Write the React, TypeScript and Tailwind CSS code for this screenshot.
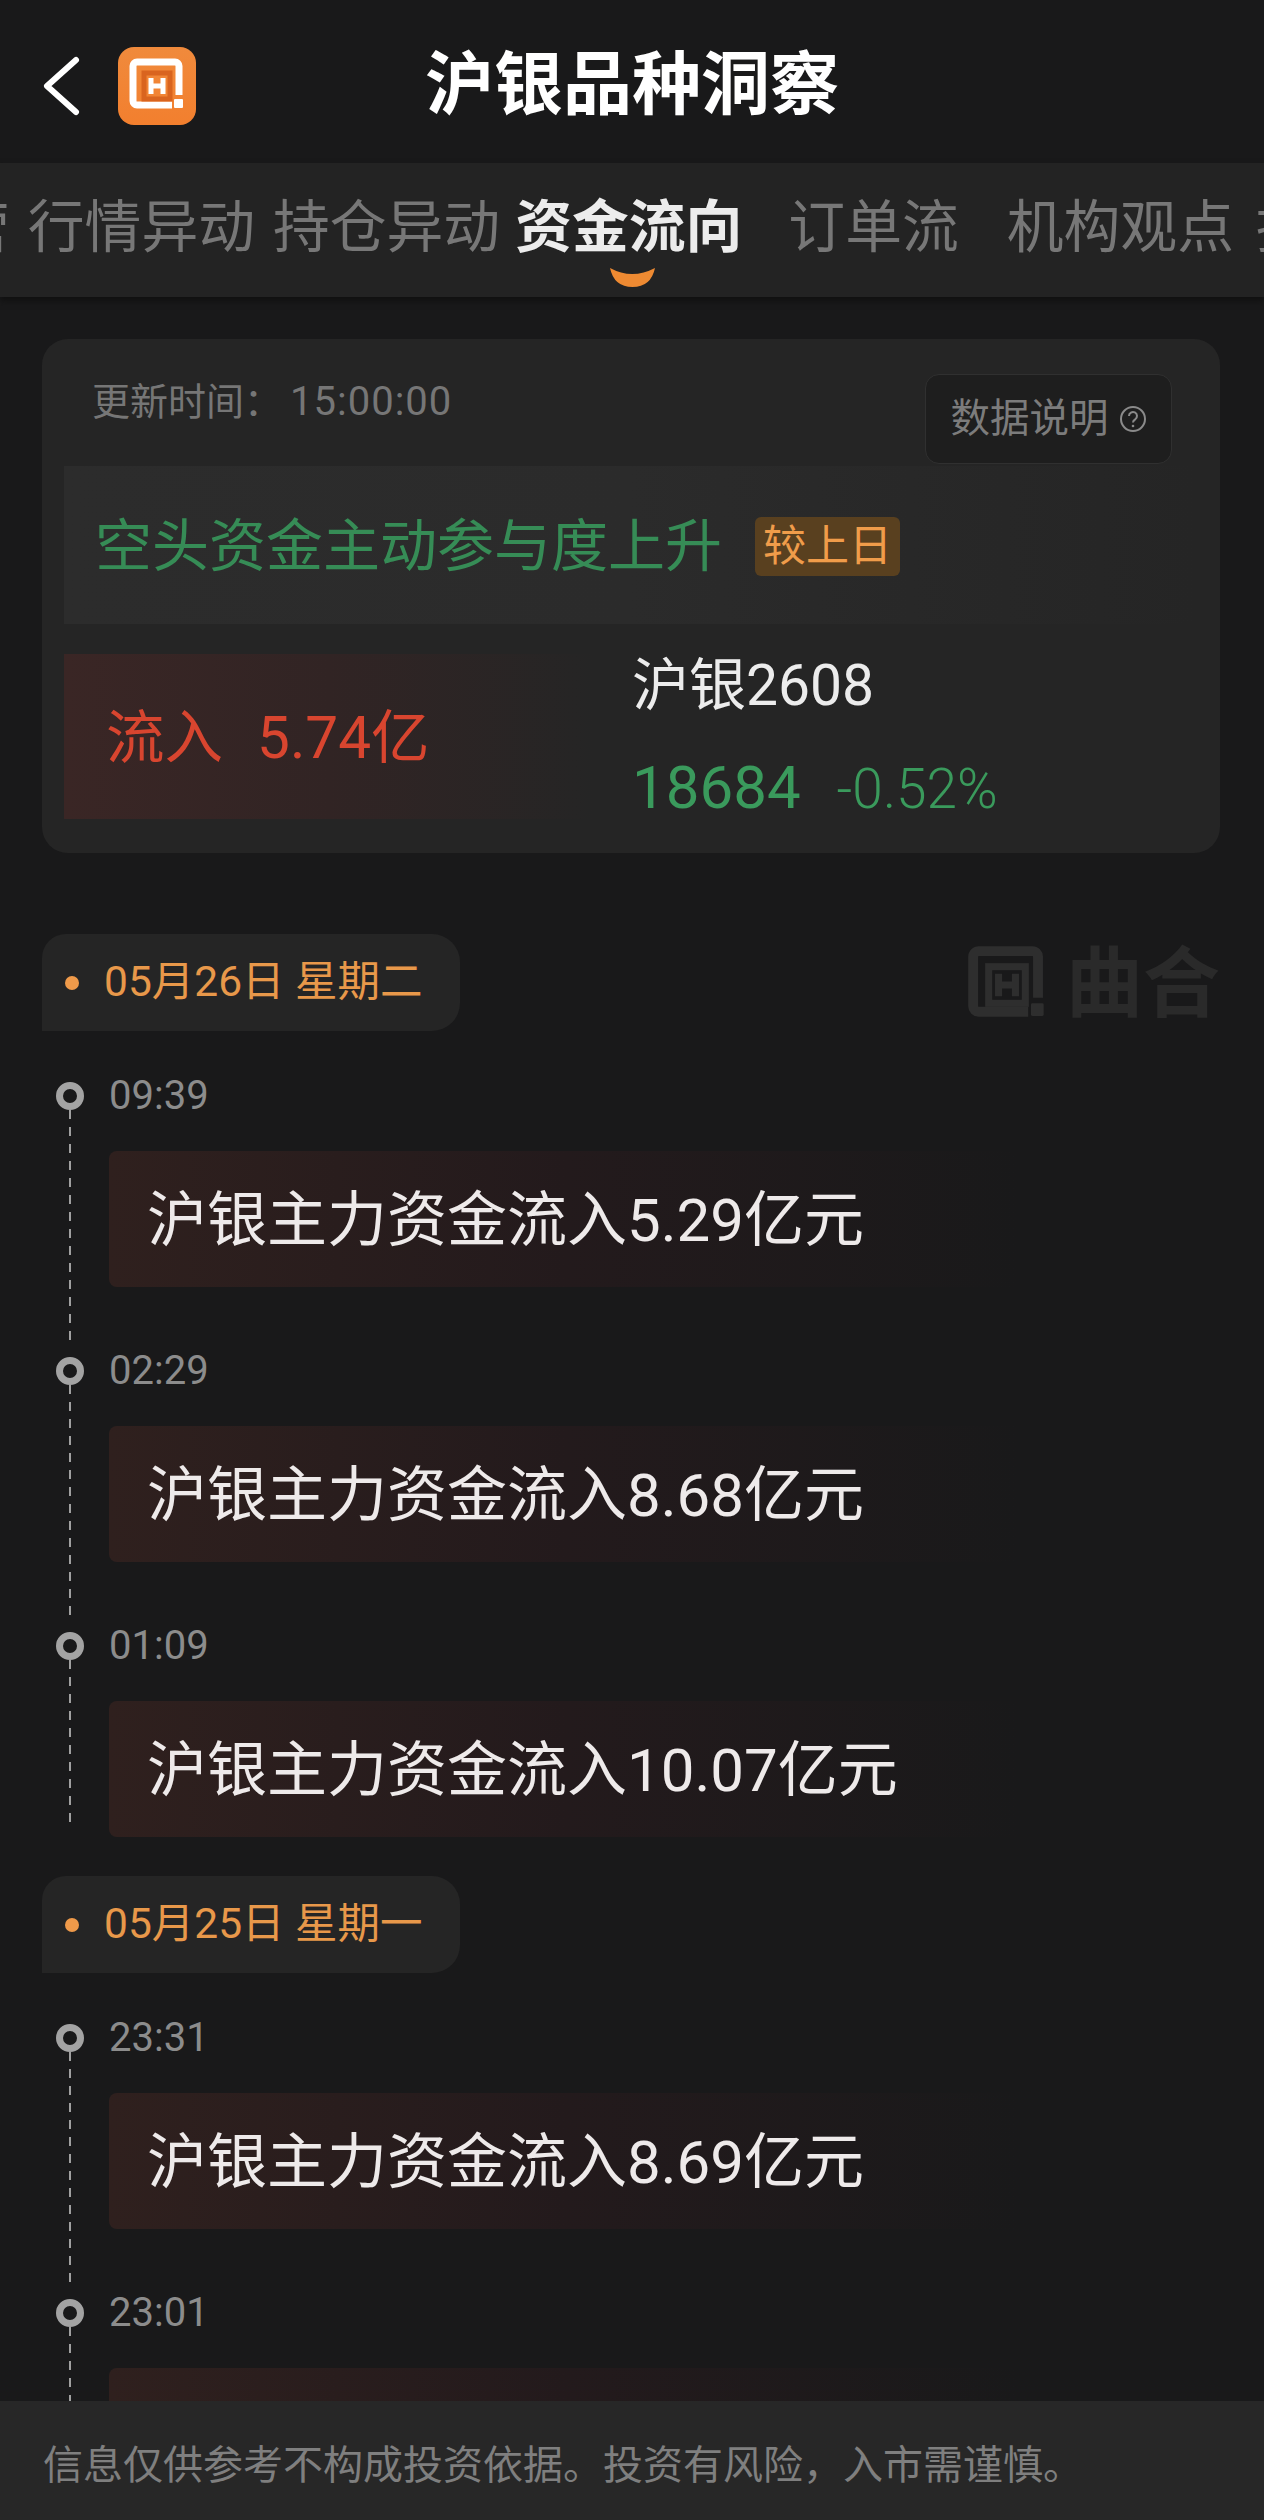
import React from 'react';

const tabs = [
  { label: '营', cls: 'ml-[-47px]' },
  { label: '行情异动', cls: 'ml-[18px]' },
  { label: '持仓异动', cls: 'ml-[18px]' },
  { label: '资金流向', cls: 'ml-[15px]', active: true },
  { label: '订单流', cls: 'ml-[46px]' },
  { label: '机构观点', cls: 'ml-[48px]' },
  { label: '持', cls: 'ml-[22px]' },
];

interface FlowItem {
  time: string;
  text: string;
  last?: boolean;
}

const day1: FlowItem[] = [
  { time: '09:39', text: '沪银主力资金流入5.29亿元' },
  { time: '02:29', text: '沪银主力资金流入8.68亿元' },
  { time: '01:09', text: '沪银主力资金流入10.07亿元', last: true },
];

const day2: FlowItem[] = [
  { time: '23:31', text: '沪银主力资金流入8.69亿元' },
  { time: '23:01', text: '沪银主力资金流入7.52亿元' },
];

function LogoMark({ className = '', stroke = '#fff', inner = '#d9641f' }: { className?: string; stroke?: string; inner?: string }) {
  return (
    <svg viewBox="0 0 78 78" className={className} fill="none">
      <path d="M54 58H19a4 4 0 0 1-4-4V19a4 4 0 0 1 4-4h38a4 4 0 0 1 4 4v29" stroke={stroke} strokeWidth="7" />
      <rect x="26" y="26" width="26" height="26" stroke={inner} strokeWidth="5" />
      <path d="M33 31v16M45 31v16M33 39h12" stroke={stroke} strokeWidth="5" />
      <rect x="56" y="52" width="9" height="9" rx="1" fill={stroke} />
    </svg>
  );
}

function DateChip({ label }: { label: string }) {
  return (
    <div className="h-[97px] w-[418px] rounded-tl-[24px] rounded-r-[28px] bg-[#252525] flex items-center">
      <span className="ml-[23px] w-[14px] h-[14px] rounded-full bg-[#ef9a4a]" />
      <span className="ml-[25px] text-[42.5px] leading-none text-[#e8984a] whitespace-nowrap">{label}</span>
    </div>
  );
}

function FlowRow({ item }: { item: FlowItem }) {
  return (
    <div className={`flex ${item.last ? '' : 'pb-[59px]'}`}>
      <div className="ml-[14px] w-[28px] flex flex-col items-center shrink-0">
        <span className="mt-[11px] w-[28px] h-[28px] rounded-full border-[7px] border-[#a3a3a3] shrink-0" />
        <span className={`w-[2px] flex-1 bg-[repeating-linear-gradient(to_bottom,#a0a0a0_0,#a0a0a0_9px,transparent_9px,transparent_17px)] ${item.last ? 'mb-[8px]' : 'mb-[-59px]'}`} />
      </div>
      <div className="ml-[25px] flex-1 min-w-0">
        <div className="h-[50px] flex items-center text-[40px] leading-none text-[#8c8c8c]">{item.time}</div>
        <div className="mt-[30px] w-[911px] h-[136px] rounded-l-[8px] flex items-center pl-[38px] pt-[4px] bg-gradient-to-r from-[#2f201e] via-[#231a1c] to-[#19191a] text-[60px] leading-none text-[#eeeaea] whitespace-nowrap">
          {item.text}
        </div>
      </div>
    </div>
  );
}

export default function App() {
  return (
    <div className="relative w-[1264px] h-[2520px] overflow-hidden bg-[#19191a] font-['Roboto','Noto_Sans_CJK_SC',sans-serif]">
      <header className="h-[163px] pt-[8px] grid grid-cols-[1fr_auto_1fr] items-center">
        <div className="flex items-center pl-[42px]">
          <svg viewBox="0 0 40 62" className="w-[40px] h-[62px]" fill="none">
            <path d="M34 5 5 31l29 26" stroke="#fff" strokeWidth="6" strokeLinecap="round" strokeLinejoin="round" />
          </svg>
          <div className="ml-[36px] w-[78px] h-[78px] rounded-[16px] bg-gradient-to-b from-[#f08a3c] to-[#f27f2e]">
            <LogoMark className="w-full h-full" />
          </div>
        </div>
        <h1 className="text-[69px] leading-none font-bold text-white whitespace-nowrap">沪银品种洞察</h1>
        <div />
      </header>

      <nav className="relative h-[134px] bg-[#232323] flex items-start pt-[37px] overflow-hidden shadow-[0_4px_6px_#111]">
        {tabs.map((tab) => (
          <div
            key={tab.label + tab.cls}
            className={`shrink-0 text-[56.8px] leading-[56px] whitespace-nowrap ${tab.cls} ${tab.active ? 'font-bold text-[#ececec]' : 'text-[#777777]'}`}
          >
            {tab.label}
          </div>
        ))}
        <svg viewBox="0 0 45 20" className="absolute left-[610px] top-[104px] w-[45px] h-[20px]">
          <path d="M0 1Q22 13 45 1 41 20 22.5 20 4 20 0 1Z" fill="#ee8a32" />
        </svg>
      </nav>

      <main className="pl-[42px] pr-[44px] pt-[42px]">
        <section className="rounded-[26px] bg-[#252525] pb-[33px]">
          <div className="flex items-start justify-between pt-[35px] pl-[50px] pr-[48px]">
            <div className="mt-[5px] flex items-baseline leading-[46px] text-[#767676] whitespace-nowrap">
              <span className="text-[38px]">更新时间：</span>
              <span className="ml-[8px] text-[40px] tracking-[1px]">15:00:00</span>
            </div>
            <div className="w-[247px] h-[90px] rounded-[14px] bg-[#1e1e1e] border border-[#303030] flex items-center justify-center gap-[10px] text-[#7c7c7c]">
              <span className="text-[39.5px] leading-none whitespace-nowrap">数据说明</span>
              <svg viewBox="0 0 28 28" className="w-[28px] h-[28px]" fill="none">
                <circle cx="14" cy="14" r="12" stroke="#8a8a8a" strokeWidth="2" />
                <path d="M10 11a4 4 0 1 1 6.2 3.3c-1.4.9-2.2 1.6-2.2 3.2" stroke="#8a8a8a" strokeWidth="2" />
                <circle cx="14" cy="21" r="1.3" fill="#8a8a8a" />
              </svg>
            </div>
          </div>

          <div className="mt-[2px] ml-[22px] w-[1130px] h-[158px] bg-gradient-to-r from-[#2c2c2c] via-[#2b2b2b] to-[#252525] flex items-center pl-[31px] pt-[2px]">
            <span className="text-[57px] leading-none text-[#368c56] whitespace-nowrap">空头资金主动参与度上升</span>
            <span className="ml-[33px] h-[59px] w-[145px] rounded-[6px] bg-[#59401f] flex items-center justify-center text-[43px] leading-none text-[#f09c4a] whitespace-nowrap">较上日</span>
          </div>

          <div className="mt-[30px] ml-[22px] flex">
            <div className="w-[530px] h-[165px] bg-gradient-to-r from-[#3a2625] via-[#312424] to-[#252525] flex items-center pl-[42px] pt-[3px] text-[58.5px] leading-none text-[#d8452f] whitespace-nowrap">
              <span>流入</span>
              <span className="ml-[34px]">5.74亿</span>
            </div>
            <div className="ml-[38px]">
              <div className="text-[57px] leading-[64px] text-[#ececec] whitespace-nowrap">沪银2608</div>
              <div className="mt-[38px] flex items-baseline h-[64px] leading-[64px] text-[#3a9a5c] whitespace-nowrap">
                <span className="text-[60px]">18684</span>
                <span className="ml-[36px] text-[55px] font-light">-0.52%</span>
              </div>
            </div>
          </div>
        </section>

        <div className="mt-[81px]">
          <DateChip label="05月26日 星期二" />
          <div className="mt-[40px]">
            {day1.map((item) => (
              <FlowRow key={item.time} item={item} />
            ))}
          </div>
        </div>

        <div className="mt-[39px]">
          <DateChip label="05月25日 星期一" />
          <div className="mt-[40px]">
            {day2.map((item) => (
              <FlowRow key={item.time} item={item} />
            ))}
          </div>
        </div>
      </main>

      {/* watermark */}
      <div className="absolute left-[952px] top-[930px] flex items-center text-[#2a2a2a]">
        <LogoMark className="w-[110px] h-[110px]" stroke="#2e2e2e" inner="#2e2e2e" />
        <span className="ml-[4px] text-[77px] leading-none font-bold whitespace-nowrap">曲合</span>
      </div>

      <footer className="absolute left-0 right-0 bottom-0 h-[119px] bg-[#272727] flex items-center pl-[43px] pt-[10px] text-[40px] leading-none text-[#7f7f7f] whitespace-nowrap">
        信息仅供参考不构成投资依据。投资有风险，入市需谨慎。
      </footer>
    </div>
  );
}
